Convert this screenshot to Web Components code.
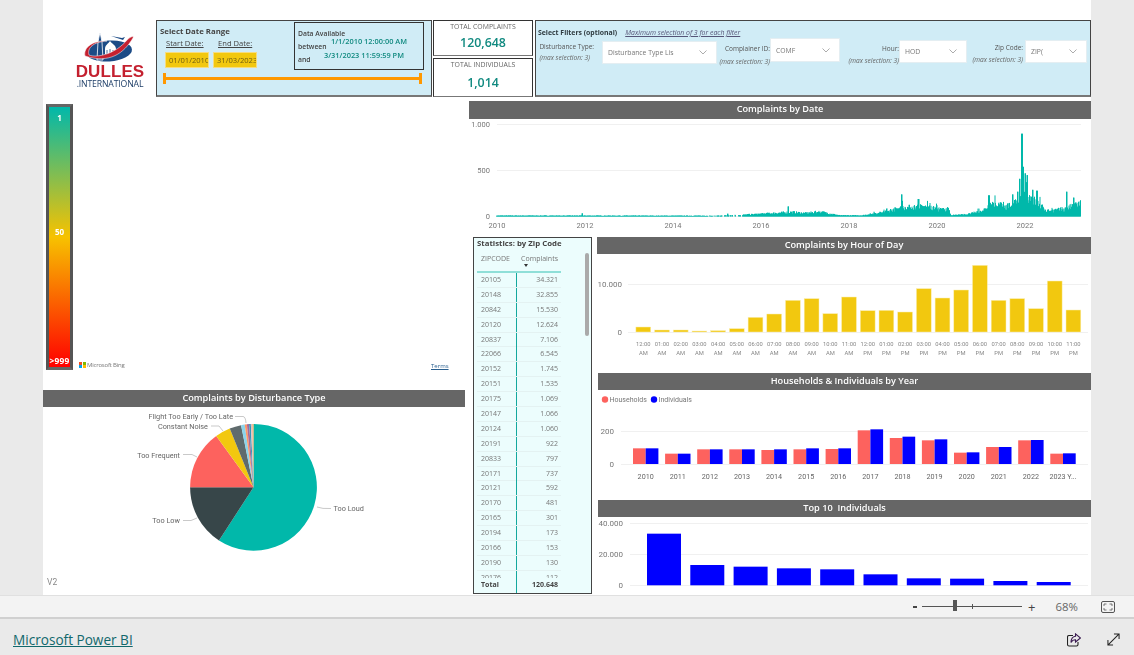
<!DOCTYPE html>
<html>
<head>
<meta charset="utf-8">
<title>Dulles noise complaints</title>
<style>
    html, body { margin: 0; padding: 0; height: 100%; background: #eaeaea; overflow: hidden; }
    body { font-family: "Open Sans", "Liberation Sans", sans-serif; }
    dash-app { width: 1134px; height: 655px; }
</style>
</head>
<body>
<dash-app></dash-app>

<template id="app-template">
    <style>
        :host { display: flex; flex-direction: column; }
        .report { width: 1048px; height: 595px; margin-left: 43px; background: #fff; display: flex; flex-direction: column; flex: none; filter: blur(.3px); }
        .top { display: flex; margin-top: 20px; height: 77px; flex: none; }
        .kpis { display: flex; flex-direction: column; gap: 2px; width: 100px; margin: 0 2px 0 1px; }
        .main { display: flex; gap: 4px; margin-top: 4px; flex: 1; min-height: 0; }
        .left { width: 422px; display: flex; flex-direction: column; padding-top: 3px; }
        .right { width: 622px; display: flex; flex-direction: column; }
        .bottom { display: flex; gap: 5px; margin-top: 4px; padding-left: 4px; flex: 1; min-height: 0; }
        .charts { width: 494px; display: flex; flex-direction: column; }
        .inset { margin-left: 1px; }
        map-legend { margin-bottom: 20px; }
    </style>
    <div class="report">
        <div class="top">
            <dulles-logo></dulles-logo>
            <date-panel></date-panel>
            <div class="kpis">
                <kpi-card label="TOTAL COMPLAINTS" value="120,648" top="1" gap="3" style="height:36px"></kpi-card>
                <kpi-card label="TOTAL INDIVIDUALS" value="1,014" top="1" gap="5" style="height:39px"></kpi-card>
            </div>
            <filter-panel></filter-panel>
        </div>
        <div class="main">
            <div class="left">
                <map-legend></map-legend>
                <title-bar>Complaints by Disturbance Type</title-bar>
                <pie-chart></pie-chart>
            </div>
            <div class="right">
                <title-bar style="height:18px;padding-bottom:3px">Complaints by Date</title-bar>
                <date-chart></date-chart>
                <div class="bottom">
                    <zip-table></zip-table>
                    <div class="charts">
                        <title-bar>Complaints by Hour of Day</title-bar>
                        <hour-chart></hour-chart>
                        <title-bar class="inset">Households &amp; Individuals by Year</title-bar>
                        <year-chart></year-chart>
                        <title-bar class="inset">Top 10  Individuals</title-bar>
                        <top-chart></top-chart>
                    </div>
                </div>
            </div>
        </div>
    </div>
    <zoom-bar></zoom-bar>
    <foot-bar></foot-bar>
</template>

<script>
const AXIS_FONT = 'Roboto, "Open Sans", sans-serif';

// charts use a viewBox in page coordinates, so numbers can be read off the screenshot
function chartSvg(x, y, w, h, body) {
    return `<style>:host{display:block;height:${h}px;flex:none}svg{display:block}text{font-family:${AXIS_FONT}}</style>
        <svg width="${w}" height="${h}" viewBox="${x} ${y} ${w} ${h}">${body}</svg>`;
}

function gridLine(x1, x2, y) {
    return `<line x1="${x1}" x2="${x2}" y1="${y + .5}" y2="${y + .5}" stroke="#f0f0f0" stroke-width="1"/>`;
}

function axisText(x, y, text, anchor, size, fill) {
    return `<text x="${x}" y="${y}" text-anchor="${anchor || 'end'}" font-size="${size || 7.5}" fill="${fill || '#777'}">${text}</text>`;
}

class Base extends HTMLElement {
    constructor() {
        super();
        this.attachShadow({ mode: 'open' });
    }
}

class DashApp extends Base {
    connectedCallback() {
        this.shadowRoot.appendChild(document.getElementById('app-template').content.cloneNode(true));
    }
}

class TitleBar extends Base {
    constructor() {
        super();
        this.shadowRoot.innerHTML = `<style>
            :host { display: flex; align-items: center; justify-content: center; height: 17px; flex: none; background: #666; color: #fff;
                font: 600 9.2px "Open Sans", sans-serif; white-space: pre; box-sizing: border-box; padding-bottom: 2px; }
        </style><slot></slot>`;
    }
}

class DullesLogo extends Base {
    constructor() {
        super();
        this.shadowRoot.innerHTML = `<style>
            :host { display: flex; flex-direction: column; align-items: center; width: 113px; flex: none; box-sizing: border-box; padding: 13px 0 0 21px; }
            svg { display: block; margin-left: -4px; }
            .name { font: 700 17px/14px "Liberation Sans", sans-serif; color: #c4202f; letter-spacing: .1px; }
            .sub { font: 400 8.7px/9px "Open Sans", sans-serif; color: #1f3f68; letter-spacing: -.15px; margin-top: 1px; }
        </style>
        <svg width="56" height="32" viewBox="0 0 56 32">
            <ellipse cx="29" cy="18" rx="23" ry="10.5" fill="#1c4b86" transform="rotate(-4 29 18)"/>
            <path d="M18 9 L20 -1 L22 9 L23 27 L17 27 Z" fill="#1c4b86" stroke="#fff" stroke-width=".8"/>
            <path d="M25 21 V16 C25 12 28 11 30 8 C32 11 36 12 36 16 V21 Z" fill="#fff"/>
            <path d="M27 21 V17 M30 21 V16 M33 21 V17" stroke="#1c4b86" stroke-width=".8"/>
            <path d="M31 3 l11 2 l3 -1 l-2 3 z" fill="#1c4b86"/>
            <path d="M5 23 C3 14 14 7 27 8 C13 9 7 15 9 22 C16 25 35 22 48 6 C52 3 54 3 53 5 C44 20 30 31 5 23 Z" fill="#c4202f" stroke="#fff" stroke-width=".5"/>
        </svg>
        <div class="name">DULLES</div>
        <div class="sub">.INTERNATIONAL</div>`;
    }
}

class DatePanel extends Base {
    constructor() {
        super();
        this.shadowRoot.innerHTML = `<style>
            :host { display: block; width: 276px; flex: none; box-sizing: border-box; background: #d0ecf6; border: 1px solid #444; border-bottom: 2px solid #777;
                position: relative; color: #444; font-family: "Open Sans", sans-serif; }
            .head { font-weight: 700; font-size: 7.8px; margin: 5px 0 0 3px; line-height: 11px; }
            .labels { display: flex; margin: 0 0 0 9px; font-size: 7.6px; line-height: 12px; text-decoration: underline; }
            .labels span:first-child { width: 52px; }
            .inputs { display: flex; gap: 4px; margin: 3px 0 0 8px; }
            .inputs div { width: 44px; height: 16px; box-sizing: border-box; background: #f2c80f; border: 1px solid #f6dc80; font-size: 7.6px; line-height: 14px; padding-left: 3px; overflow: hidden; white-space: nowrap; color: #6d5c12; }
            .slider { margin: 5px 9px 0 6px; height: 11px; display: flex; align-items: center; border-left: 3px solid #ff9800; border-right: 3px solid #ff9800; }
            .slider div { flex: 1; height: 2.5px; background: #ff9800; }
            .info { position: absolute; left: 137px; top: 1px; width: 130px; height: 48px; box-sizing: border-box; border: 1px solid #333; font-size: 6.8px; font-weight: 600; }
            .info span { position: absolute; white-space: nowrap; line-height: 9px; }
            .info .v { color: #118a80; font-size: 7.4px; font-weight: 600; }
        </style>
        <div class="head">Select Date Range</div>
        <div class="labels"><span>Start Date:</span><span>End Date:</span></div>
        <div class="inputs"><div>01/01/2010</div><div>31/03/2023</div></div>
        <div class="slider"><div></div></div>
        <div class="info">
            <span style="left:3px;top:6px">Data Available</span>
            <span style="left:3px;top:19px">between</span>
            <span style="left:3px;top:32px">and</span>
            <span class="v" style="left:36px;top:14px">1/1/2010 12:00:00 AM</span>
            <span class="v" style="left:29px;top:28px">3/31/2023 11:59:59 PM</span>
        </div>`;
    }
}

class KpiCard extends Base {
    connectedCallback() {
        this.shadowRoot.innerHTML = `<style>
            :host { display: flex; flex-direction: column; align-items: center; box-sizing: border-box; border: 1px solid #333; border-bottom-color: #777; flex: none; font-family: "Open Sans", sans-serif; }
            .l { font-size: 6.9px; color: #666; line-height: 9px; margin-top: ${this.getAttribute('top')}px; }
            .v { font-size: 12.4px; font-weight: 600; color: #118a80; line-height: 18px; margin-top: ${this.getAttribute('gap')}px; }
        </style>
        <div class="l">${this.getAttribute('label')}</div><div class="v">${this.getAttribute('value')}</div>`;
    }
}

class FilterSelect extends Base {
    connectedCallback() {
        const w = this.getAttribute('width');
        const text = this.getAttribute('text');
        this.shadowRoot.innerHTML = `<style>
            :host { display: flex; align-items: center; justify-content: space-between; width: ${w}px; height: 23px; box-sizing: border-box; flex: none; background: #fff; border: 1px solid #e4eef2;
                padding: 0 9px 0 5px; font: 6.8px "Open Sans", sans-serif; color: #777; white-space: nowrap; }
            span { overflow: hidden; width: ${this.getAttribute('clip')}px; }
            svg { flex: none; }
        </style>
        <span>${text}</span>
        <svg width="8" height="5" viewBox="0 0 8 5"><path d="M.5 .5 L4 4 L7.5 .5" fill="none" stroke="#888" stroke-width=".7"/></svg>`;
    }
}

class FilterPanel extends Base {
    constructor() {
        super();
        this.shadowRoot.innerHTML = `<style>
            :host { display: block; width: 556px; flex: none; box-sizing: border-box; background: #d0ecf6; border: 1px solid #444; border-bottom: 2px solid #777; font-family: "Open Sans", sans-serif; color: #555; }
            .head { display: flex; gap: 8px; margin: 7px 0 0 2px; line-height: 9px; height: 10px; }
            .head b { font-size: 6.9px; color: #2f3b40; }
            .head i { font-size: 6.9px; text-decoration: underline; color: #557; }
            .row { display: grid; grid-template-columns: 176px 123px 127px 120px; margin: 0 0 0 5px; }
            .cell { display: flex; justify-content: flex-end; }
            .lab { text-align: right; font-size: 6.5px; line-height: 9px; white-space: nowrap; }
            .lab em { display: block; font-size: 6.6px; color: #666; }
        </style>
        <div class="head"><b>Select Filters (optional)</b><i>Maximum selection of 3 for each filter</i></div>
        <div class="row">
            <div class="cell" style="gap:8px;padding-top:3px">
                <div class="lab" style="padding-top:.5px;text-align:left">Disturbance Type:<em style="margin-top:2px">(max selection: 3)</em></div>
                <filter-select width="115" text="Disturbance Type Lis" clip="80"></filter-select>
            </div>
            <div class="cell">
                <div class="lab" style="padding-top:5.5px">Complainer ID:<em style="margin-top:4px">(max selection: 3)</em></div>
                <filter-select width="70" text="COMF" clip="40" style="height:24px"></filter-select>
            </div>
            <div class="cell" style="padding-top:2px">
                <div class="lab" style="padding-top:3.5px">Hour:<em style="margin-top:3px">(max selection: 3)</em></div>
                <filter-select width="68" text="HOD" clip="40"></filter-select>
            </div>
            <div class="cell" style="gap:2px;padding-top:2px">
                <div class="lab" style="padding-top:2.5px">Zip Code:<em style="margin-top:3px">(max selection: 3)</em></div>
                <filter-select width="62" text="ZIP(" clip="16"></filter-select>
            </div>
        </div>`;
    }
}

class MapLegend extends Base {
    constructor() {
        super();
        this.shadowRoot.innerHTML = `<style>
            :host { display: block; height: 266px; flex: none; position: relative; font-family: "Open Sans", sans-serif; }
            .bar { position: absolute; left: 3px; top: 0; width: 27px; height: 266px; box-sizing: border-box; border: 3px solid #555; border-color: #666 #555;
                background: linear-gradient(#01b8aa 0%, #f7c200 50%, #f00 100%); color: #fff; font-weight: 700; font-size: 8px; }
            .bar span { position: absolute; left: 0; right: 0; text-align: center; line-height: 10px; }
            .bing { position: absolute; left: 36px; top: 257px; display: flex; align-items: center; gap: 1.5px; font-size: 6px; line-height: 8px; color: #777; letter-spacing: -.2px; }
            .squares { display: grid; grid-template-columns: 3px 3px; gap: .5px; }
            .squares i { width: 3px; height: 3px; display: block; }
            .terms { position: absolute; left: 388px; top: 258px; font-size: 6px; color: #2a5f8f; text-decoration: underline; }
        </style>
        <div class="bar"><span style="top:6px">1</span><span style="top:120px">50</span><span style="top:249px;font-size:8.4px;letter-spacing:.2px">&gt;999</span></div>
        <div class="bing"><span class="squares"><i style="background:#f25022"></i><i style="background:#7fba00"></i><i style="background:#00a4ef"></i><i style="background:#ffb900"></i></span>Microsoft Bing</div>
        <div class="terms">Terms</div>`;
    }
}

class PieChart extends Base {
    constructor() {
        super();
        const cx = 253.5, cy = 487.3, r = 63.4;
        const slices = [[0, 213, '#01b8aa'], [213, 270, '#374649'], [270, 324, '#fd625e'], [324, 338, '#f2c80f'], [338, 348.7, '#5f6b6d'],
            [348.7, 352, '#8ad4eb'], [352, 354, '#fe9666'], [354, 356, '#a66999'], [356, 357.6, '#3599b8'], [357.6, 359, '#dfbfbf'], [359, 360, '#f2a65a']];
        const pt = a => { const t = a * Math.PI / 180; return `${(cx + r * Math.sin(t)).toFixed(2)} ${(cy - r * Math.cos(t)).toFixed(2)}`; };
        let body = slices.map(([a, b, c]) => `<path d="M${cx} ${cy} L${pt(a)} A${r} ${r} 0 ${b - a > 180 ? 1 : 0} 1 ${pt(b)} Z" fill="${c}"/>`).join('');
        const lines = ['M235 416.5 H243 Q245.5 416.5 246 423', 'M211 426 H219 L223 431', 'M183 454.5 H192 L197 457', 'M183 520.5 H191 L197 518', 'M317 507 Q322 509 331 508.5'];
        body += lines.map(d => `<path d="${d}" fill="none" stroke="#bbb" stroke-width=".8"/>`).join('');
        body += axisText(233, 419, 'Flight Too Early / Too Late', 'end', 7.3, '#666');
        body += axisText(208, 428.5, 'Constant Noise', 'end', 7.3, '#666');
        body += axisText(180, 457.5, 'Too Frequent', 'end', 7.3, '#666');
        body += axisText(180, 523, 'Too Low', 'end', 7.3, '#666');
        body += axisText(333.5, 511, 'Too Loud', 'start', 7.3, '#666');
        body += axisText(47, 585, 'V2', 'start', 8.5, '#888');
        this.shadowRoot.innerHTML = chartSvg(43, 407, 422, 188, body);
    }
}

class DateChart extends Base {
    constructor() {
        super();
        let seed = 7;
        const rnd = () => (seed = (seed * 16807) % 2147483647) / 2147483647;
        // year, usual top of the bars
        const env = [[2010, 13], [2015, 11], [2015.6, 24], [2016.4, 52], [2016.7, 62], [2017, 48], [2017.35, 68], [2017.8, 16], [2018.3, 16], [2018.8, 65],
            [2019.15, 120], [2019.6, 140], [2020.15, 95], [2020.25, 115], [2020.32, 20], [2020.7, 32], [2021.1, 95], [2021.2, 165], [2021.6, 145], [2021.85, 210],
            [2022.05, 300], [2022.2, 230], [2022.5, 80], [2022.9, 105], [2023.25, 190]];
        const spikes = { 2011.95: 35, 2015.25: 30, 2016.62: 110, 2019.2: 240, 2019.58: 190, 2021.18: 230, 2021.72: 240, 2021.83: 270, 2021.88: 410,
            2021.93: 900, 2021.96: 540, 2022: 470, 2022.05: 450, 2022.17: 290, 2022.27: 280, 2022.95: 270, 2023.1: 205 };
        const value = yr => {
            let i = 0;
            while (i < env.length - 2 && env[i + 1][0] < yr) i++;
            const [a, va] = env[i], [b, vb] = env[i + 1];
            return va + (vb - va) * (yr - a) / (b - a);
        };
        const x0 = 496.5, pxYear = 44.05, base = 216.5, scale = 92 / 1000;
        let d = '';
        for (let x = x0; x < 1081; x += .5) {
            const yr = 2010 + (x - x0) / pxYear;
            if (yr > 2014.8 && yr < 2015.6 && rnd() < .4) continue;
            let v = value(yr) * (.5 + .5 * rnd());
            if (yr > 2018.5 && rnd() < .06) v *= 1.5;
            Object.keys(spikes).forEach(k => { if (Math.abs(k - yr) < .012) v = spikes[k]; });
            d += `M${x} ${base}V${(base - v * scale).toFixed(1)}`;
        }
        let body = gridLine(497, 1081, 124) + gridLine(497, 1081, 170) + gridLine(497, 1081, 216);
        body += `<path d="${d}" stroke="#01b8aa" stroke-width="1" fill="none"/>`;
        body += axisText(490, 127, '1.000') + axisText(490, 173, '500') + axisText(490, 219, '0');
        for (let y = 2010; y <= 2022; y += 2) body += axisText(497 + (y - 2010) * 44, 227.5, y, 'middle');
        this.shadowRoot.innerHTML = chartSvg(469, 119, 622, 114, body);
    }
}

class HourChart extends Base {
    constructor() {
        super();
        const tops = [276, 285, 285, 288, 287, 281, 247, 237, 196, 191, 236, 186, 227, 226, 231, 161, 189, 165, 91, 196, 191, 221, 138, 225];
        let body = gridLine(628, 1088, 284) + gridLine(628, 1088, 332);
        body += axisText(622, 287, '10.000', 'end', 8) + axisText(622, 335, '0', 'end', 8);
        tops.forEach((t, i) => {
            const cx = 643.3 + i * 18.7, top = 235 + t / 3;
            body += `<rect x="${cx - 7.4}" y="${top}" width="14.8" height="${332 - top}" fill="#f2c80f" stroke="#faeeb0" stroke-width=".5"/>`;
            const hour = String(i % 12 === 0 ? 12 : i % 12).padStart(2, '0') + ':00';
            body += axisText(cx, 346, hour, 'middle', 5.8, '#888') + axisText(cx, 355, i < 12 ? 'AM' : 'PM', 'middle', 5.8, '#888');
        });
        this.shadowRoot.innerHTML = chartSvg(597, 254, 494, 119, body);
    }
}

class YearChart extends Base {
    constructor() {
        super();
        const house = [235, 251, 238, 238, 240, 238, 237, 181, 204, 211, 248, 231, 211, 251];
        const indiv = [235, 251, 238, 238, 238, 235, 235, 178, 200, 208, 247, 231, 210, 250];
        const toY = v => 370 + v / 3;
        let body = gridLine(621, 1088, 431) + gridLine(621, 1088, 464);
        body += `<circle cx="605" cy="399.5" r="3.2" fill="#fd625e"/><circle cx="654" cy="399.5" r="3.2" fill="#0000ff"/>`;
        body += axisText(609.5, 402, 'Households', 'start', 7) + axisText(658.5, 402, 'Individuals', 'start', 7);
        body += axisText(614, 433.5, '200', 'end', 8) + axisText(614, 466.5, '0', 'end', 8);
        house.forEach((h, i) => {
            const cx = 645.7 + i * 32.1;
            body += `<rect x="${cx - 12.7}" y="${toY(h)}" width="12.7" height="${464 - toY(h)}" fill="#fd625e"/>`;
            body += `<rect x="${cx}" y="${toY(indiv[i])}" width="12.7" height="${464 - toY(indiv[i])}" fill="#0000ff"/>`;
            body += axisText(cx, 478.5, i === 13 ? '2023 Y...' : 2010 + i, 'middle', 7.2, '#666');
        });
        this.shadowRoot.innerHTML = chartSvg(597, 390, 494, 110, body);
    }
}

class TopChart extends Base {
    constructor() {
        super();
        const tops = [491, 585, 590, 595, 598, 613, 625, 626, 633, 636];
        let body = gridLine(630, 1088, 523) + gridLine(630, 1088, 554) + gridLine(630, 1088, 585);
        body += axisText(623, 526, '40.000', 'end', 8) + axisText(623, 557, '20.000', 'end', 8) + axisText(623, 588, '0', 'end', 8);
        tops.forEach((t, i) => {
            const top = 370 + t / 3;
            body += `<rect x="${647 + i * 43.3}" y="${top}" width="34" height="${585.3 - top}" fill="#0000ff"/>`;
        });
        this.shadowRoot.innerHTML = chartSvg(597, 517, 494, 78, body);
    }
}

class ZipTable extends Base {
    constructor() {
        super();
        const rows = [['20105', '34.321'], ['20148', '32.855'], ['20842', '15.530'], ['20120', '12.624'], ['20837', '7.106'], ['22066', '6.545'], ['20152', '1.745'],
            ['20151', '1.535'], ['20175', '1.069'], ['20147', '1.066'], ['20124', '1.060'], ['20191', '922'], ['20833', '797'], ['20171', '737'], ['20121', '592'],
            ['20170', '481'], ['20165', '301'], ['20194', '173'], ['20166', '153'], ['20190', '130'], ['20176', '112']];
        this.shadowRoot.innerHTML = `<style>
            :host { display: flex; flex-direction: column; width: 119px; height: 357px; flex: none; box-sizing: border-box; background: #ecfdfd; border: 1px solid #444; position: relative;
                font-family: "Open Sans", sans-serif; color: #777; }
            .title { font-weight: 700; font-size: 7.8px; color: #444; line-height: 11px; margin: 0 0 0 3px; }
            .head, .row, .total { display: grid; grid-template-columns: 40px 44px; margin-left: 3px; width: 84px; font-size: 7px; }
            .head { padding-top: 5px; box-sizing: border-box; border-bottom: 2px solid #8fdfd8; line-height: 10px; height: 24px; position: relative; }
            .head span:first-child, .row span:first-child, .total span:first-child { padding-left: 4px; }
            .num { text-align: right; padding-right: 3px; }
            .arrow { position: absolute; left: 47px; top: 15px; width: 0; height: 0; border: 2.5px solid transparent; border-top: 3px solid #333; border-bottom: 0; }
            .body { flex: 1; overflow: hidden; min-height: 0; position: relative; }
            .row { height: 14.9px; line-height: 14px; border-bottom: 1px solid #e4f2f2; box-sizing: border-box; }
            .row span:first-child, .total span:first-child { border-right: 1.5px solid #14a89e; }
            .total { height: 15px; line-height: 13px; font-weight: 700; color: #444; }
            .scroll { position: absolute; left: 111px; top: 15px; width: 4px; height: 83px; background: #aaa; border-radius: 2px; }
        </style>
        <div class="title">Statistics: by Zip Code</div>
        <div class="head"><span>ZIPCODE</span><span class="num">Complaints</span><i class="arrow"></i></div>
        <div class="body">${rows.map(r => `<div class="row"><span>${r[0]}</span><span class="num">${r[1]}</span></div>`).join('')}</div>
        <div class="total"><span>Total</span><span class="num">120.648</span></div>
        <div class="scroll"></div>`;
    }
}

class ZoomBar extends Base {
    constructor() {
        super();
        this.shadowRoot.innerHTML = `<style>
            :host { display: flex; align-items: center; justify-content: flex-end; height: 24px; flex: none; box-sizing: border-box; background: #f3f3f3; border-top: 1px solid #e0e0e0; border-bottom: 2px solid #d0d0d0;
                font: 11.4px "Open Sans", sans-serif; color: #666; padding-right: 19px; }
            .minus { width: 4px; height: 2px; background: #444; margin-right: 5px; }
            .track { width: 100px; height: 1px; background: #555; position: relative; margin-right: 6px; }
            .thumb { position: absolute; left: 31px; top: -6px; width: 4px; height: 11px; background: #555; }
            .tick { position: absolute; left: 50px; top: -2px; width: 1px; height: 5px; background: #555; }
            .plus { font-size: 13px; line-height: 14px; color: #444; margin-right: 20px; }
            .pct { margin-right: 23px; }
            svg { display: block; }
        </style>
        <div class="minus"></div>
        <div class="track"><div class="thumb"></div><div class="tick"></div></div>
        <div class="plus">+</div>
        <div class="pct">68%</div>
        <svg width="14" height="12" viewBox="0 0 14 12" fill="none" stroke="#555"><rect x=".5" y=".5" width="13" height="11" rx="1.5"/><path d="M3 5V3H5.5M8.5 3H11V5M11 7V9H8.5M5.5 9H3V7" stroke-width=".8"/></svg>`;
    }
}

class FootBar extends Base {
    constructor() {
        super();
        this.shadowRoot.innerHTML = `<style>
            :host { display: flex; align-items: center; height: 36px; flex: none; box-sizing: border-box; background: #eaeaea; padding: 5px 14px 0 13px; }
            a { font: 13.6px "Open Sans", sans-serif; color: #11686c; text-decoration: underline; flex: 1; }
            svg { display: block; fill: none; stroke: #222; stroke-width: 1.1; }
        </style>
        <a>Microsoft Power BI</a>
        <svg width="14" height="14" viewBox="0 0 14 14" style="margin-right:26px"><path d="M6 2.5H2A1.5 1.5 0 0 0 .5 4V11.5A1.5 1.5 0 0 0 2 13H9.5A1.5 1.5 0 0 0 11 11.5V9"/><path d="M8.5 .8L13.5 5L8.5 9V6.8C6.5 6.8 5 7.6 4 9.5C4 6 5.8 3.6 8.5 3.2Z" stroke="#3a1a50"/></svg>
        <svg width="13" height="13" viewBox="0 0 14 14"><path d="M1.5 12.5L12.5 1.5M7.5 1H13V6.5M1 7.5V13H6.5"/></svg>`;
    }
}

customElements.define('title-bar', TitleBar);
customElements.define('dulles-logo', DullesLogo);
customElements.define('date-panel', DatePanel);
customElements.define('kpi-card', KpiCard);
customElements.define('filter-select', FilterSelect);
customElements.define('filter-panel', FilterPanel);
customElements.define('map-legend', MapLegend);
customElements.define('pie-chart', PieChart);
customElements.define('date-chart', DateChart);
customElements.define('hour-chart', HourChart);
customElements.define('year-chart', YearChart);
customElements.define('top-chart', TopChart);
customElements.define('zip-table', ZipTable);
customElements.define('zoom-bar', ZoomBar);
customElements.define('foot-bar', FootBar);
customElements.define('dash-app', DashApp);
</script>
</body>
</html>
